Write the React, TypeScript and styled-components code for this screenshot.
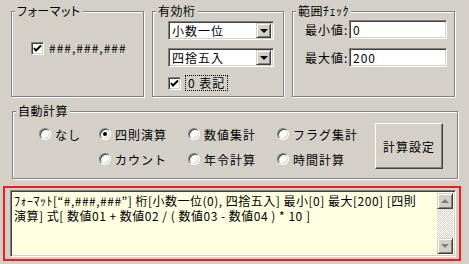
import React from "react";
import styled, { createGlobalStyle } from "styled-components";

const FACE = "#d4d0c8";

const GlobalStyle = createGlobalStyle`
  html, body {
    margin: 0;
    padding: 0;
    background: ${FACE};
  }
  body {
    font-family: "Noto Sans CJK JP", "Noto Sans", sans-serif;
    font-size: 12px;
    color: #000;
  }
`;

const Window = styled.div`
  box-sizing: border-box;
  display: flex;
  flex-direction: column;
  width: 469px;
  height: 264px;
  padding-top: 11px;
  overflow: hidden;
  background: ${FACE};
`;

const TopRow = styled.div`
  display: flex;
  gap: 8px;
  margin-left: 11px;
`;

const Group = styled.div<{ $w: number; $h: number; $pad: string }>`
  position: relative;
  box-sizing: border-box;
  width: ${(p) => p.$w}px;
  height: ${(p) => p.$h}px;
  padding: ${(p) => p.$pad};
  border: 1px solid #808080;
  box-shadow: inset 1px 1px 0 #fff, 1px 1px 0 #fff;
`;

const GroupTitle = styled.span`
  position: absolute;
  top: -8px;
  left: 3px;
  padding: 0 2px;
  line-height: 14px;
  background: ${FACE};
  white-space: nowrap;
  font-feature-settings: "palt";
  letter-spacing: 0.5px;
`;

const Column = styled.div<{ $gap: number }>`
  display: flex;
  flex-direction: column;
  gap: ${(p) => p.$gap}px;
`;

const CheckRow = styled.label<{ $mt?: number }>`
  display: flex;
  align-items: center;
  gap: 5px;
  margin-top: ${(p) => p.$mt ?? 0}px;
  line-height: 14px;
  letter-spacing: 1px;
  white-space: nowrap;
`;

const CheckBox = styled.span`
  box-sizing: border-box;
  display: flex;
  align-items: center;
  justify-content: center;
  width: 13px;
  height: 13px;
  flex: none;
  background: #fff;
  border: 1px solid;
  border-color: #808080 #fff #fff #808080;
  box-shadow: inset 1px 1px 0 #404040, inset -1px -1px 0 ${FACE};
`;

const FocusText = styled.span`
  padding: 0 2px;
  outline: 1px dotted #000;
  outline-offset: 0;
`;

const Field = styled.div<{ $w: number }>`
  box-sizing: border-box;
  display: flex;
  align-items: center;
  width: ${(p) => p.$w}px;
  height: 19px;
  padding: 2px;
  background: #fff;
  border: 1px solid;
  border-color: #808080 #fff #fff #808080;
  box-shadow: inset 1px 1px 0 #404040, inset -1px -1px 0 ${FACE};
`;

const FieldText = styled.span`
  flex: 1;
  padding-left: 1px;
  line-height: 14px;
  letter-spacing: 1px;
  white-space: nowrap;
`;

const DropButton = styled.span`
  box-sizing: border-box;
  display: flex;
  align-items: center;
  justify-content: center;
  width: 15px;
  height: 15px;
  background: ${FACE};
  border: 1px solid;
  border-color: ${FACE} #404040 #404040 ${FACE};
  box-shadow: inset 1px 1px 0 #fff, inset -1px -1px 0 #808080;
`;

const Arrow = styled.span<{ $up?: boolean; $color?: string }>`
  width: 0;
  height: 0;
  border-left: 4px solid transparent;
  border-right: 4px solid transparent;
  ${(p) =>
    p.$up
      ? `border-bottom: 4px solid ${p.$color ?? "#000"};`
      : `border-top: 4px solid ${p.$color ?? "#000"};`}
`;

const RangeRow = styled.div`
  display: flex;
  align-items: center;
`;

const RangeLabel = styled.span`
  width: 44px;
  letter-spacing: 1px;
  white-space: nowrap;
`;

const AutoGroup = styled(Group)`
  display: flex;
  align-items: flex-start;
  margin: 14px 0 0 12px;
`;

const RadioGrid = styled.div`
  display: grid;
  grid-template-columns: 60px 89px 89px 88px;
  row-gap: 11px;
  margin-top: 4px;
`;

const RadioItem = styled.label<{ $col?: number }>`
  display: flex;
  align-items: center;
  gap: 4px;
  height: 14px;
  grid-column: ${(p) => p.$col ?? "auto"};
  white-space: nowrap;
  letter-spacing: 1px;
`;

const RadioDot = styled.span<{ $on?: boolean }>`
  position: relative;
  box-sizing: border-box;
  width: 12px;
  height: 12px;
  flex: none;
  border-radius: 50%;
  background: #fff;
  border: 1px solid;
  border-color: #808080 #fff #fff #808080;
  box-shadow: inset 1px 1px 0 #404040, inset -1px -1px 0 ${FACE};

  &::after {
    content: "";
    display: ${(p) => (p.$on ? "block" : "none")};
    position: absolute;
    left: 3px;
    top: 3px;
    width: 4px;
    height: 4px;
    border-radius: 50%;
    background: #000;
  }
`;

const PushButton = styled.button`
  box-sizing: border-box;
  width: 68px;
  height: 46px;
  margin-left: auto;
  padding: 0;
  font: inherit;
  font-size: 12px;
  letter-spacing: 1px;
  color: #000;
  background: ${FACE};
  border: 1px solid;
  border-color: #fff #404040 #404040 #fff;
  box-shadow: inset -1px -1px 0 #808080, inset 1px 1px 0 ${FACE};
`;

const Highlight = styled.div`
  box-sizing: border-box;
  width: 458px;
  height: 75px;
  margin: 7px 0 0 3px;
  padding: 2px 3px 2px 5px;
  border: 2px solid #f01c1c;
`;

const Edit = styled.div`
  box-sizing: border-box;
  display: flex;
  height: 100%;
  padding: 2px;
  background: #ffffe1;
  border: 1px solid;
  border-color: #808080 #fff #fff #808080;
  box-shadow: inset 1px 1px 0 #404040, inset -1px -1px 0 ${FACE};
`;

const EditText = styled.div`
  flex: 1;
  padding: 0 1px;
  line-height: 15px;
  letter-spacing: 0.5px;
  white-space: nowrap;
  overflow: hidden;
`;

const ScrollBar = styled.div`
  display: flex;
  flex-direction: column;
  justify-content: space-between;
  width: 16px;
  background-color: #fff;
  background-image: repeating-conic-gradient(${FACE} 0 25%, #fff 0 50%);
  background-size: 2px 2px;
`;

const ScrollButton = styled(DropButton)`
  width: 16px;
  height: 16px;
`;

const Check = () => (
  <svg width="9" height="9" viewBox="0 0 9 9">
    <path d="M1 4 L3 6.5 L8 1.5" fill="none" stroke="#000" strokeWidth="2" />
  </svg>
);

export default function App() {
  return (
    <>
      <GlobalStyle />
      <Window>
        <TopRow>
          <Group $w={133} $h={86} $pad="29px 0 0 19px">
            <GroupTitle>フォーマット</GroupTitle>
            <CheckRow>
              <CheckBox>
                <Check />
              </CheckBox>
              <span>###,###,###</span>
            </CheckRow>
          </Group>
          <Group $w={132} $h={86} $pad="9px 0 0 15px">
            <GroupTitle>有効桁</GroupTitle>
            <Column $gap={8}>
              <Field $w={106}>
                <FieldText>小数一位</FieldText>
                <DropButton>
                  <Arrow />
                </DropButton>
              </Field>
              <Field $w={106}>
                <FieldText>四捨五入</FieldText>
                <DropButton>
                  <Arrow />
                </DropButton>
              </Field>
              <CheckRow $mt={1}>
                <CheckBox>
                  <Check />
                </CheckBox>
                <FocusText>0 表記</FocusText>
              </CheckRow>
            </Column>
          </Group>
          <Group $w={163} $h={86} $pad="8px 0 0 12px">
            <GroupTitle>範囲ﾁｪｯｸ</GroupTitle>
            <Column $gap={9}>
              <RangeRow>
                <RangeLabel>最小値:</RangeLabel>
                <Field $w={98}>
                  <FieldText>0</FieldText>
                </Field>
              </RangeRow>
              <RangeRow>
                <RangeLabel>最大値:</RangeLabel>
                <Field $w={98}>
                  <FieldText>200</FieldText>
                </Field>
              </RangeRow>
            </Column>
          </Group>
        </TopRow>

        <AutoGroup $w={446} $h={68} $pad="11px 14px 0 26px">
          <GroupTitle>自動計算</GroupTitle>
          <RadioGrid>
            <RadioItem>
              <RadioDot />
              なし
            </RadioItem>
            <RadioItem>
              <RadioDot $on />
              四則演算
            </RadioItem>
            <RadioItem>
              <RadioDot />
              数値集計
            </RadioItem>
            <RadioItem>
              <RadioDot />
              フラグ集計
            </RadioItem>
            <RadioItem $col={2}>
              <RadioDot />
              カウント
            </RadioItem>
            <RadioItem>
              <RadioDot />
              年令計算
            </RadioItem>
            <RadioItem>
              <RadioDot />
              時間計算
            </RadioItem>
          </RadioGrid>
          <PushButton>計算設定</PushButton>
        </AutoGroup>

        <Highlight>
          <Edit>
            <EditText>
              ﾌｫｰﾏｯﾄ[“#,###,###”] 桁[小数一位(0), 四捨五入] 最小[0] 最大[200] [四則
              <br />
              演算] 式[ 数値01 + 数値02 / ( 数値03 - 数値04 ) * 10 ]
            </EditText>
            <ScrollBar>
              <ScrollButton>
                <Arrow $up $color="#808080" />
              </ScrollButton>
              <ScrollButton>
                <Arrow $color="#808080" />
              </ScrollButton>
            </ScrollBar>
          </Edit>
        </Highlight>
      </Window>
    </>
  );
}
